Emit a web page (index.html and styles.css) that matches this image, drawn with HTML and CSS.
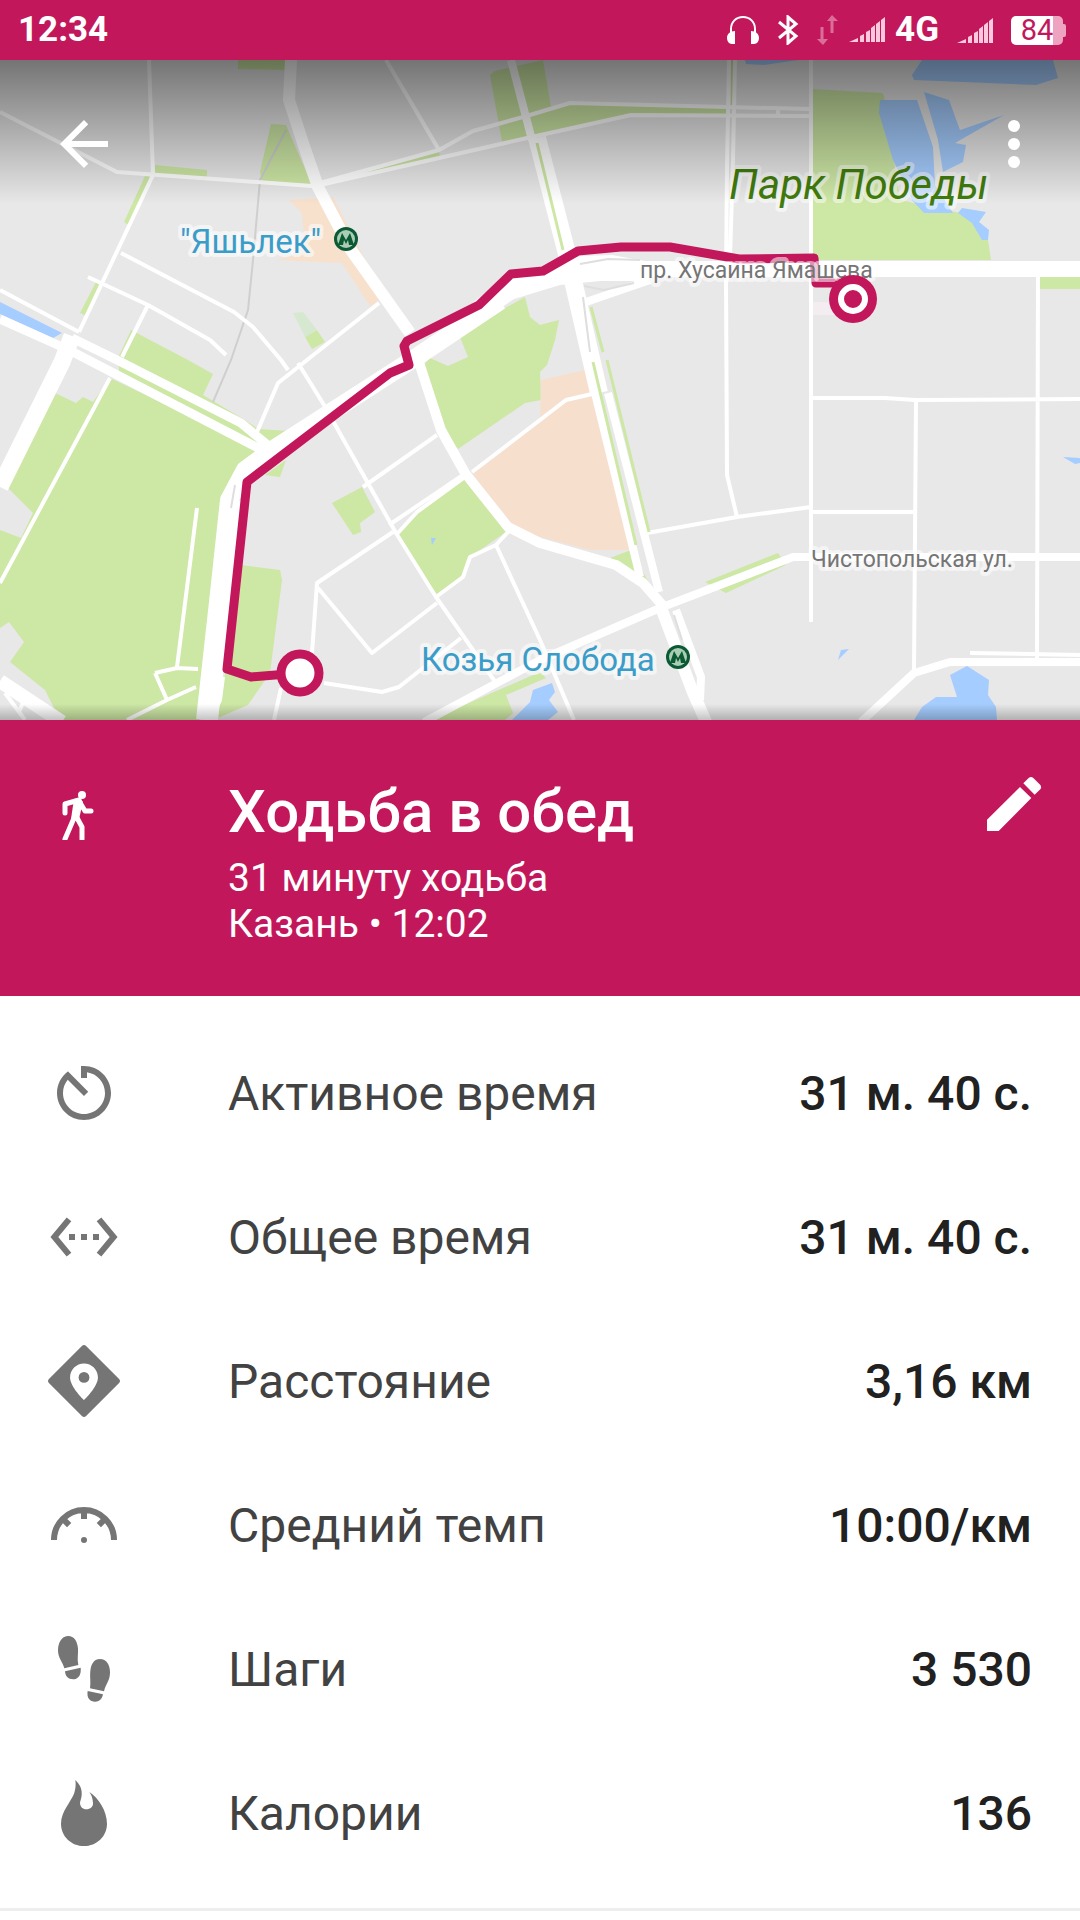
FILE: index.html
```html
<!DOCTYPE html>
<html lang="ru">
<head>
<meta charset="utf-8">
<meta name="viewport" content="width=device-width, initial-scale=1">
<title>Ходьба в обед</title>
<link rel="stylesheet" href="styles.css">
</head>
<body>
<div class="status-bar">
  <time class="clock">12:34</time>
  <div class="status-icons">
    <svg class="headphones" viewBox="0 0 32 28" aria-hidden="true">
      <path d="M4 17V13C4 6 9 1 16 1s12 5 12 12v4" fill="none" stroke="#fff" stroke-width="2"/>
      <path d="M8 15v13H5c-3 0-5-3-5-6 0-4 3-7 8-7zM24 15v13h3c3 0 5-3 5-6 0-4-3-7-8-7z" fill="#fff"/>
    </svg>
    <svg class="bluetooth" viewBox="0 0 22 30" aria-hidden="true">
      <path d="M2 7l17 14-8 7V2l8 7L2 23" fill="none" stroke="#fff" stroke-width="3"/>
    </svg>
    <div class="mobile-data">
      <svg class="traffic" viewBox="0 0 22 30" aria-hidden="true">
        <path d="M5 12v14M15 18V4" fill="none" stroke="#db6d99" stroke-width="3"/>
        <path d="M0 24h11l-5 6zM10 6l5-6 6 6z" fill="#db6d99"/>
      </svg>
      <svg class="signal" viewBox="0 0 36 26" aria-hidden="true">
        <path d="M0 25l9-4v4zM11 19l4-2v8h-4zM17 15l4-2v12h-4zM22 11l4-3v17h-4zM27 7l4-3v21h-4zM32 3l4-3v25h-4z" fill="#fbc8de"/>
      </svg>
      <span>4G</span>
    </div>
    <svg class="signal" viewBox="0 0 36 26" aria-hidden="true">
      <path d="M0 26l9-4v4zM11 20l4-2v8h-4zM17 16l4-2v12h-4zM22 12l4-3v17h-4zM27 8l4-3v21h-4zM32 4l4-3v25h-4z" fill="#fbc8de"/>
    </svg>
    <span class="battery">84</span>
  </div>
</div>

<main>
  <section class="map">
    <svg class="map-canvas" viewBox="0 60 1080 660" preserveAspectRatio="xMidYMid slice" role="img" aria-label="Маршрут на карте">
      <defs>
        <linearGradient id="shade-top" x1="0" y1="0" x2="0" y2="1">
          <stop offset="0" stop-color="#000" stop-opacity=".5"/>
          <stop offset="1" stop-color="#000" stop-opacity="0"/>
        </linearGradient>
        <linearGradient id="shade-bottom" x1="0" y1="0" x2="0" y2="1">
          <stop offset="0" stop-color="#000" stop-opacity="0"/>
          <stop offset="1" stop-color="#000" stop-opacity=".24"/>
        </linearGradient>
        <g id="metro">
          <circle r="12" fill="#0b5a34"/>
          <circle r="9" fill="#a9cdb5"/>
          <path d="M-8 6L-4-6 0 1 4-6 8 6H3L2 1 0 5-2 1-3 6z" fill="#0b5a34"/>
        </g>
      </defs>
      <rect y="60" width="1080" height="660" fill="#e8e8e8"/>

      <!-- parks -->
      <g class="park">
        <path d="M238 60H285V70L238 69z"/>
        <path d="M271 124L286 125 312 185 262 182 260 172z"/>
        <path d="M155 165L207 170V178L155 175z"/>
        <path d="M145 176L152 177 130 226 124 222z"/>
        <path d="M96 282L102 284 87 316 80 313z"/>
        <path d="M358 172L439 152 440 156 358 176z"/>
        <path d="M490 75L495 71 543 60 551 107 570 104 727 107V115H631L540 134 502 142z"/>
        <path d="M131 330L188 360 213 374 203 395 245 420 258 429 289 431 265 447 120 380 118 358z"/>
        <path d="M55 393L76 403 83 397 93 402 110 378 262 450 240 470 224 493 220 527 200 720H60L45 690 10 662 24 642 9 622 0 628V530L21 538 33 513 7 487z"/>
        <path d="M305 337L317 330 325 342 312 349z"/>
        <path d="M460 337L496 313 525 297 530 317 540 325 559 320 555 340 547 365 540 372 541 400 525 403 458 449 441 430 424 365 430 358 448 366 468 357z"/>
        <path d="M241 565L280 570 282 580 270 673 248 705 213 720 224 680z"/>
        <path d="M332 503L362 487 375 512 360 523 361 532 353 535z"/>
        <path d="M465 478L506 532 470 557 463 577 436 595 396 535 417 512z"/>
        <path d="M265 475L286 460 280 477z"/>
        <path d="M430 720L540 672 546 678 506 695 513 713 505 720z"/>
        <path d="M610 558L631 550 654 592z"/>
        <path d="M705 582L778 553 786 565 726 593z"/>
        <path d="M812 89L882 93 884 96 900 200 960 213 975 220 988 240 991 260H812z"/>
        <path d="M1039 277H1080V289H1039z"/>
        <path d="M731 60H734V107H731z"/>
      </g>
      <path d="M293 313L303 312 317 330 305 337z" fill="#d7e8d0"/>
      <path d="M811 302H834V315H811z" fill="#f3edf1"/>

      <!-- built-up districts -->
      <path d="M289 200L333 197 372 273 379 300 370 306 342 263 276 260 305 253 302 213z" fill="#f7e1cd"/>
      <path d="M472 473L540 420 541 380 585 370 631 550 590 550 540 537 512 527z" fill="#f7dfce"/>

      <!-- water -->
      <g class="water">
        <path d="M0 302L62 333 53 338 0 314z"/>
        <path d="M431 538H436L432 545z"/>
        <path d="M533 690L552 683 555 692 549 700 558 712 548 720H512L530 702z"/>
        <path d="M879 113L880 100H917L933 147 935 185 953 213H924L912 200 893 160z"/>
        <path d="M924 92L949 100 960 130 1004 115 955 143 966 145 963 162 943 172 938 140z"/>
        <path d="M922 60H1053L1058 78 1036 85 914 80 912 75z"/>
        <path d="M745 60H798L764 65 746 64z"/>
        <path d="M962 208L986 212 979 222 989 230 988 240H982L972 223 958 213z"/>
        <path d="M967 666L989 680 988 695 996 707 997 720H914L922 707 936 697H957L950 675z"/>
        <path d="M838 660L841 650 849 649z"/>
        <path d="M1063 457L1080 458V463L1075 464z"/>
      </g>

      <path d="M286 130L260 180 253 260 248 310 231 360 213 402" fill="none" stroke="#cfcfcf" stroke-width="2"/>

      <!-- side streets -->
      <g class="road street">
        <path d="M0 112L117 172 312 186M149 60L153 175 79 332M121 253L234 312 253 327 281 360 288 370M88 277L148 305 210 340 226 355M148 305L122 357M110 378L86 423 0 583"/>
        <path d="M386 60L439 150M320 183L439 150 473 131 523 117 570 103 727 107 811 109M320 185L527 138 631 115 811 116M778 109V116"/>
        <path d="M379 303L278 383 257 432M197 508L177 667M155 673L177 668 198 669M155 673L167 700 196 687M167 700L127 720M223 677L220 700 213 714"/>
        <path d="M298 363L324 405 396 533 436 597 496 683M363 487L437 435M389 525L463 475M396 535L417 512 465 477M393 532L317 583 312 653M318 588L372 653 437 603"/>
        <path d="M508 532L496 545 470 557 463 577 436 597M496 545L540 640 574 720M324 683L382 692 399 687 461 638M281 688L274 720M5 693L25 720M24 700L19 712"/>
        <path d="M647 533L737 517 811 507M729 60L727 167 726 280 727 475 737 517M735 60L733 160 730 258M811 60V622M811 398H885L915 400 1080 399M916 400L914 672M811 512H914M1038 277L1037 658M970 653L1080 655"/>
        <path d="M0 290L79 332M472 472L540 420 566 400 592 394"/>
      </g>
      <!-- main roads -->
      <g class="road">
        <path d="M291 60L289 100 303 143 318 187 351 250 410 333" stroke-width="12"/>
        <path d="M415 350L441 430 465 473 508 527 540 543 616 565 643 583 664 607" stroke-width="10"/>
        <path d="M205 720L219 593 229 500 245 470 272 450 415 358 500 301" stroke-width="18"/>
        <path d="M208 720L222 593 234 500" stroke-width="20"/>
        <path d="M640 269H1080" stroke-width="16"/>
        <path d="M586 302L650 280" stroke-width="8"/>
        <path d="M0 319L69 350 262 450M72 338L117 360 241 423 270 447" stroke-width="9"/>
        <path d="M72 336L62 362 0 487" stroke-width="17"/>
        <path d="M0 681L62 722" stroke-width="14"/>
        <path d="M424 722L540 660 660 608 793 557H1080M861 722L914 673 950 662H1080" stroke-width="8"/>
        <path d="M511 60L532 140" stroke-width="8"/>
        <path d="M537 138L566 250 599 393" stroke-width="18"/>
        <path d="M595 393L640 577M608 393L659 592" stroke-width="8"/>
        <path d="M660 605L692 690 707 724" stroke-width="12"/>
        <path d="M676 610L701 677 700 700" stroke-width="8"/>
      </g>
      <path d="M478 323L514 299 560 285 600 281 645 281V261L612 255 580 256 545 270 511 272 470 305z" fill="#fff"/>
      <g class="median">
        <path d="M537 143L563 250M593 362L636 545M607 360L649 532M591 307L603 352"/>
      </g>
      <path d="M580 264L608 259 640 260M584 286L604 290 634 283M235 485L231 508M583 297L590 352M674 615L682 640" fill="none" stroke="#dedede" stroke-width="2"/>

      <!-- walked route -->
      <path class="route" d="M300 673L251 677 227 669 247 482 390 373 409 365 404 346 407 341 479 305 511 274 543 271 578 251 621 247H670L739 259 814 258 816 283H840"/>

      <g class="map-label">
        <text class="station" x="180" y="253">"Яшьлек"</text>
        <text class="station" x="421" y="671">Козья Слобода</text>
        <text class="park-name" x="729" y="199">Парк Победы</text>
        <text class="street-name" x="640" y="278">пр. Хусаина Ямашева</text>
        <text class="street-name" x="811" y="567">Чистопольская ул.</text>
      </g>
      <use href="#metro" x="346" y="239"/>
      <use href="#metro" x="678" y="657"/>

      <rect y="60" width="1080" height="144" fill="url(#shade-top)"/>
      <rect y="704" width="1080" height="16" fill="url(#shade-bottom)"/>

      <circle cx="300" cy="673" r="19" fill="#fff" stroke="#c2185b" stroke-width="9"/>
      <circle cx="853" cy="299" r="24" fill="#c2185b"/>
      <circle cx="853" cy="299" r="12" fill="none" stroke="#fff" stroke-width="6"/>
    </svg>
    <nav class="toolbar">
      <button type="button" class="icon-button" aria-label="Назад">
        <svg class="icon" viewBox="0 0 24 24"><path d="M20 11H7.83l5.59-5.59L12 4l-8 8 8 8 1.41-1.41L7.83 13H20v-2z"/></svg>
      </button>
      <button type="button" class="icon-button" aria-label="Ещё">
        <svg class="icon" viewBox="0 0 24 24"><circle cx="12" cy="6" r="2"/><circle cx="12" cy="12" r="2"/><circle cx="12" cy="18" r="2"/></svg>
      </button>
    </nav>
  </section>

  <header class="summary">
    <svg class="icon" viewBox="48 768 72 72" aria-hidden="true">
      <circle cx="82" cy="795" r="4"/>
      <path d="M65 813V804L79 800M79 801L85 811H91M74 818L65 839M76 816L82 827V839" fill="none" stroke="currentColor" stroke-width="5" stroke-linecap="round" stroke-linejoin="round"/>
      <path d="M74 799L80 798 83 802 79 819H71z"/>
    </svg>
    <div class="summary-text">
      <h1>Ходьба в обед</h1>
      <p>31 минуту ходьба</p>
      <p>Казань • 12:02</p>
    </div>
    <button type="button" class="icon-button" aria-label="Изменить">
      <svg class="icon" viewBox="954 83 216 216"><path d="M981 272V238L1080 140 1114 173 1016 272zM1090 129L1106 113Q1113 107 1120 113L1141 134Q1146 141 1141 147L1124 163z"/></svg>
    </button>
  </header>

  <dl class="metrics">
    <div class="metric">
      <dt><svg class="icon" viewBox="0 0 24 24" aria-hidden="true"><path d="M11 3v4h2V5.080c3.390.49 6 3.390 6 6.920 0 3.870-3.130 7-7 7s-7-3.130-7-7c0-1.680.59-3.220 1.580-4.420L12 13l1.410-1.410-6.800-6.800v.02C4.420 6.450 3 9.050 3 12c0 4.970 4.020 9 9 9 4.970 0 9-4.030 9-9s-4.030-9-9-9h-1z"/></svg>Активное время</dt>
      <dd>31 м. 40 с.</dd>
    </div>
    <div class="metric">
      <dt><svg class="icon" viewBox="0 0 24 24" aria-hidden="true"><path d="M7.770 6.760L6.230 5.480.82 12l5.410 6.520 1.540-1.280L3.420 12l4.350-5.240zM7 13h2v-2H7v2zm10-2h-2v2h2v-2zm-6 2h2v-2h-2v2zm6.770-7.520l-1.540 1.280L20.580 12l-4.350 5.240 1.540 1.280L23.180 12l-5.410-6.520z"/></svg>Общее время</dt>
      <dd>31 м. 40 с.</dd>
    </div>
    <div class="metric">
      <dt><svg class="icon" viewBox="0 0 24 24" aria-hidden="true"><path fill-rule="evenodd" d="M11.300.3q.7-.6 1.400 0l11 11q.6.7 0 1.400l-11 11q-.7.6-1.400 0l-11-11q-.6-.7 0-1.400zM12 6.200c-2.600 0-4.650 2.100-4.650 4.650C7.350 14 12 18.400 12 18.400s4.650-4.400 4.650-7.550C16.650 8.300 14.600 6.200 12 6.200z"/><circle cx="12" cy="10.800" r="1.800"/></svg>Расстояние</dt>
      <dd>3,16 км</dd>
    </div>
    <div class="metric">
      <dt><svg class="icon" viewBox="0 0 24 24" aria-hidden="true"><path d="M2 17a10 10 0 0 1 20 0M12 7v3M5.300 10.300l1.750 1.750M18.700 10.300l-1.750 1.750" fill="none" stroke="currentColor" stroke-width="2"/><circle cx="12" cy="17" r="1"/></svg>Средний темп</dt>
      <dd>10:00/км</dd>
    </div>
    <div class="metric">
      <dt><svg class="icon" viewBox="54 516 216 216" aria-hidden="true"><path d="M113 525C95 526 84 545 84 568 84 592 98 602 103 622L145 612C141 595 145 580 144 562 142 540 132 524 113 525zM105 631L152 620C154 640 147 652 132 655 115 656 106 646 105 631zM210 594C229 594 241 612 240 636 239 662 227 668 222 691L180 682C183 662 179 650 181 630 183 608 193 594 210 594zM173 690L219 700C216 716 207 723 193 722 178 720 170 710 173 690z"/></svg>Шаги</dt>
      <dd>3 530</dd>
    </div>
    <div class="metric">
      <dt><svg class="icon" viewBox="54 948 216 216" aria-hidden="true"><path d="M136 957C150 970 157 985 155 1003 154 1015 150 1020 150 1027 151 1038 158 1045 169 1045 181 1045 190 1037 189 1026 188 1014 186 1004 178 993 205 1010 231 1050 231 1088 231 1126 200 1155 162 1155 124 1155 93 1126 93 1088 93 1050 125 1020 133 995 137 982 138 970 136 957z"/></svg>Калории</dt>
      <dd>136</dd>
    </div>
  </dl>
</main>
</body>
</html>
```
FILE: styles.css
```css
:root {
  --accent: #c2185b;
  --font: Roboto, "Noto Sans", sans-serif;
}

* {
  box-sizing: border-box;
}

body,
h1,
p,
dl,
dd {
  margin: 0;
}

body {
  background: #fff;
  font-family: var(--font);
}

svg {
  display: block;
  flex: none;
}

/* Status bar */
.status-bar {
  display: flex;
  align-items: center;
  justify-content: space-between;
  height: 60px;
  padding: 0 17px 0 18px;
  background: var(--accent);
  color: #fff;
  font-size: 35px;
  font-weight: 700;
  line-height: 60px;
}

.status-icons {
  display: flex;
  align-items: center;
  gap: 18px;
}

.mobile-data {
  display: flex;
  align-items: center;
  gap: 10px;
}

.headphones {
  width: 32px;
  height: 28px;
}

.bluetooth,
.traffic {
  width: 22px;
  height: 30px;
}

.signal {
  width: 36px;
  height: 26px;
}

.battery {
  position: relative;
  width: 52px;
  height: 29px;
  border-radius: 5px;
  background: linear-gradient(90deg, #fff 42px, #eea3c1 42px);
  color: var(--accent);
  font-size: 29px;
  font-weight: 400;
  line-height: 29px;
  text-align: center;
}

.battery::after {
  content: "";
  position: absolute;
  top: 8px;
  left: 100%;
  width: 3px;
  height: 13px;
  border-radius: 0 2px 2px 0;
  background: #eea3c1;
}

/* Icons and icon buttons */
.icon {
  width: 72px;
  height: 72px;
  fill: currentColor;
}

.icon-button {
  flex: none;
  width: 72px;
  height: 72px;
  padding: 0;
  border: 0;
  background: none;
  color: #fff;
  cursor: pointer;
}

/* Map */
.map {
  position: relative;
}

.map-canvas {
  width: 100%;
  aspect-ratio: 18 / 11;
}

.toolbar {
  position: absolute;
  inset: 0 0 auto;
  display: flex;
  justify-content: space-between;
  padding: 48px 30px 0 48px;
}

.park {
  fill: #cde7a5;
}

.water {
  fill: #a5cdff;
}

.road {
  fill: none;
  stroke: #fff;
  stroke-linejoin: round;
}

.street {
  stroke-width: 4px;
}

.median {
  fill: none;
  stroke: #cde7a5;
  stroke-width: 3px;
}

.route {
  fill: none;
  stroke: var(--accent);
  stroke-width: 9px;
  stroke-linejoin: round;
}

.map-label {
  stroke: rgba(255, 255, 255, 0.55);
  stroke-width: 8px;
  stroke-linejoin: round;
  paint-order: stroke;
}

.station {
  fill: #3a9cc8;
  font-size: 33px;
}

.park-name {
  fill: #417c0c;
  font-size: 42px;
  font-style: italic;
}

.street-name {
  fill: #757575;
  font-size: 23px;
}

/* Workout summary */
.summary {
  display: flex;
  align-items: flex-start;
  min-height: 276px;
  padding: 48px 30px 48px 48px;
  background: var(--accent);
  color: #fff;
}

.summary-text {
  flex: 1;
  padding: 8px 0 0 108px;
}

.summary-text h1 {
  margin-bottom: 7px;
  font-size: 60px;
  font-weight: 500;
  line-height: 72px;
}

.summary-text p {
  font-size: 39px;
  line-height: 46px;
}

/* Metrics */
.metrics {
  padding: 25px 48px 23px;
  border-bottom: 3px solid #eee;
}

.metric {
  display: flex;
  align-items: center;
  justify-content: space-between;
  height: 144px;
  font-size: 48px;
}

.metric dt {
  display: flex;
  align-items: center;
  gap: 108px;
  color: #424242;
}

.metric dt .icon {
  color: #757575;
}

.metric dd {
  color: #212121;
  font-weight: 500;
}
```
